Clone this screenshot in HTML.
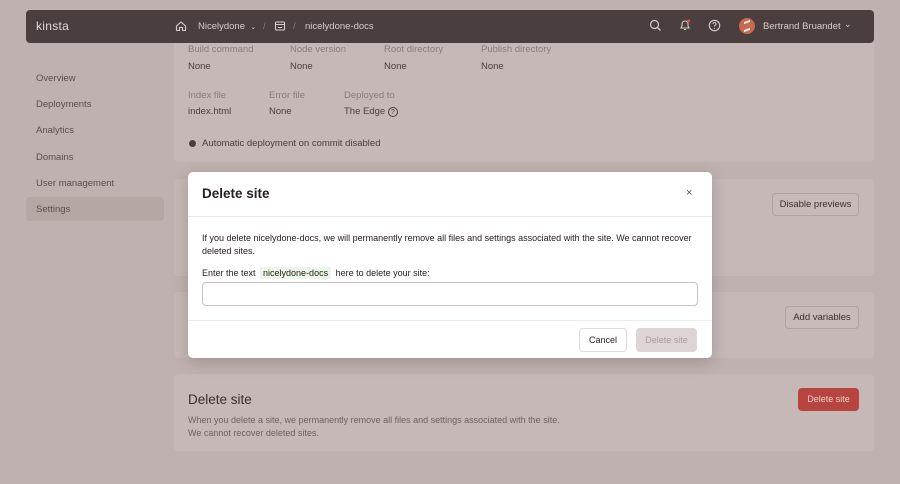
<!DOCTYPE html>
<html><head><meta charset="utf-8"><style>
*{box-sizing:border-box;margin:0;padding:0}
body{width:900px;height:484px;overflow:hidden;background:#bfb1af;font-family:"Liberation Sans",sans-serif;position:relative;color:#3a3030}
.abs{position:absolute}
.top{left:26px;top:10px;width:848px;height:33px;background:#4a3f3e;border-radius:4px;color:#d8cdcb;font-size:9.5px;z-index:10}
.card{position:absolute;left:174px;width:700px;background:#c5b8b6;border-radius:4px}
.lbl{position:absolute;font-size:9.5px;color:#8a7c7a}
.val{position:absolute;font-size:9.5px;color:#4a3f3e}
.nav{position:absolute;left:36px;font-size:9.5px;color:#5a4e4c}
.btn{position:absolute;border:1px solid #b0a2a0;background:#c7bab8;border-radius:4px;font-size:9.5px;color:#3a3030;text-align:center}
.modal{position:absolute;left:188px;top:172px;width:524px;height:186px;background:#fff;border-radius:5px;box-shadow:0 4px 16px rgba(0,0,0,.18);z-index:20}
</style></head><body>
<div class="abs top">
  <div class="abs" style="left:10px;top:9px;font-size:12px;letter-spacing:.3px;color:#e2d8d6">kinsta</div>
  <svg class="abs" style="left:149px;top:10px" width="12" height="12" viewBox="0 0 12 12"><path d="M1.5 6L6 2l4.5 4v4.5h-3v-3h-3v3h-3z" fill="none" stroke="#d8cdcb" stroke-width="1.1"/></svg>
  <div class="abs" style="left:172px;top:11px">Nicelydone&nbsp; <span style="font-size:7px">⌄</span></div>
  <div class="abs" style="left:237px;top:11px;color:#8a7c7a">/</div>
  <svg class="abs" style="left:248px;top:10px" width="12" height="12" viewBox="0 0 12 12"><rect x="1.5" y="2" width="9" height="8" rx="1" fill="none" stroke="#d8cdcb" stroke-width="1.1"/><path d="M1.5 4.5h9M4 7.5h4" stroke="#d8cdcb" stroke-width="1.1"/></svg>
  <div class="abs" style="left:267px;top:11px;color:#8a7c7a">/</div>
  <div class="abs" style="left:279px;top:11px">nicelydone-docs</div>
  <svg class="abs" style="left:623px;top:9px" width="13" height="13" viewBox="0 0 13 13"><circle cx="5.5" cy="5.5" r="4" fill="none" stroke="#d8cdcb" stroke-width="1.2"/><path d="M8.5 8.5l3 3" stroke="#d8cdcb" stroke-width="1.3"/></svg>
  <svg class="abs" style="left:652px;top:8px" width="14" height="14" viewBox="0 0 14 14"><path d="M3 10h8l-1-2V6a3 3 0 0 0-6 0v2z M6 11.5h2" fill="none" stroke="#d8cdcb" stroke-width="1.1"/><circle cx="10.5" cy="3" r="1.6" fill="#d9534f"/></svg>
  <svg class="abs" style="left:682px;top:9px" width="13" height="13" viewBox="0 0 13 13"><circle cx="6.5" cy="6.5" r="5.2" fill="none" stroke="#d8cdcb" stroke-width="1.1"/><path d="M5 5a1.5 1.5 0 1 1 2 1.4c-.5.2-.5.6-.5 1.1" fill="none" stroke="#d8cdcb" stroke-width="1"/><circle cx="6.5" cy="9.3" r=".6" fill="#d8cdcb"/></svg>
  <div class="abs" style="left:713px;top:8px;width:16px;height:16px;border-radius:50%;background:#c9694f"><div class="abs" style="left:5px;top:3px;width:6px;height:10px;border:2px solid #eee;border-left:none;border-right:none;transform:skewY(-20deg)"></div></div>
  <div class="abs" style="left:737px;top:11px">Bertrand Bruandet</div>
  <div class="abs" style="left:818px;top:9px;font-size:9px">⌄</div>
</div>

<div class="nav" style="top:73px">Overview</div>
<div class="nav" style="top:99px">Deployments</div>
<div class="nav" style="top:125px">Analytics</div>
<div class="nav" style="top:152px">Domains</div>
<div class="nav" style="top:178px">User management</div>
<div class="abs" style="left:26px;top:197px;width:138px;height:24px;background:#b5a7a4;border-radius:4px"></div>
<div class="nav" style="top:204px">Settings</div>

<div class="card" style="top:30px;height:132px"></div>
<div class="lbl" style="left:188px;top:44px">Build command</div>
<div class="lbl" style="left:290px;top:44px">Node version</div>
<div class="lbl" style="left:384px;top:44px">Root directory</div>
<div class="lbl" style="left:481px;top:44px">Publish directory</div>
<div class="val" style="left:188px;top:61px">None</div>
<div class="val" style="left:290px;top:61px">None</div>
<div class="val" style="left:384px;top:61px">None</div>
<div class="val" style="left:481px;top:61px">None</div>
<div class="lbl" style="left:188px;top:90px">Index file</div>
<div class="lbl" style="left:269px;top:90px">Error file</div>
<div class="lbl" style="left:344px;top:90px">Deployed to</div>
<div class="val" style="left:188px;top:106px">index.html</div>
<div class="val" style="left:269px;top:106px">None</div>
<div class="val" style="left:344px;top:106px">The Edge <span style="display:inline-block;width:10px;height:10px;border:1px solid #4a3f3e;border-radius:50%;font-size:7px;text-align:center;line-height:9px">?</span></div>
<div class="abs" style="left:189px;top:140px;width:7px;height:7px;border-radius:50%;background:#4a3f3e"></div>
<div class="val" style="left:202px;top:138px">Automatic deployment on commit disabled</div>

<div class="card" style="top:179px;height:97px"></div>
<div class="btn" style="left:772px;top:193px;width:87px;height:23px;line-height:21px">Disable previews</div>
<div class="card" style="top:292px;height:66px"></div>
<div class="btn" style="left:785px;top:306px;width:74px;height:23px;line-height:21px">Add variables</div>
<div class="card" style="top:374px;height:77px"></div>
<div class="abs" style="left:188px;top:392px;font-size:13.5px;color:#3a3030">Delete site</div>
<div class="abs" style="left:188px;top:414px;font-size:9px;color:#6e6160;line-height:12.5px">When you delete a site, we permanently remove all files and settings associated with the site.<br>We cannot recover deleted sites.</div>
<div class="abs" style="left:798px;top:388px;width:61px;height:23px;background:#b8443f;border-radius:4px;color:#e8cfcd;font-size:9px;text-align:center;line-height:23px">Delete site</div>

<div class="modal">
  <div class="abs" style="left:14px;top:14px;font-size:13.5px;font-weight:bold;color:#2a2020">Delete site</div>
  <div class="abs" style="left:498px;top:15px;font-size:11px;color:#555">×</div>
  <div class="abs" style="left:0;top:44px;width:524px;height:1px;background:#ece6e5"></div>
  <div class="abs" style="left:14px;top:60px;width:495px;font-size:9px;color:#2a2020;line-height:13px">If you delete nicelydone-docs, we will permanently remove all files and settings associated with the site. We cannot recover deleted sites.</div>
  <div class="abs" style="left:14px;top:96px;font-size:9px;color:#2a2020">Enter the text <span style="background:#eaf6e6;padding:1px 3px;margin:0 2px">nicelydone-docs</span> here to delete your site:</div>
  <div class="abs" style="left:14px;top:110px;width:496px;height:24px;border:1px solid #c9c0bf;border-radius:4px"></div>
  <div class="abs" style="left:0;top:148px;width:524px;height:1px;background:#f0ebea"></div>
  <div class="abs" style="left:391px;top:156px;width:48px;height:24px;border:1px solid #e3dcdb;border-radius:4px;font-size:9px;text-align:center;line-height:22px;color:#2a2020">Cancel</div>
  <div class="abs" style="left:448px;top:156px;width:61px;height:24px;background:#ddd5d4;border-radius:4px;font-size:9px;text-align:center;line-height:24px;color:#a99e9c">Delete site</div>
</div>
</body></html>
